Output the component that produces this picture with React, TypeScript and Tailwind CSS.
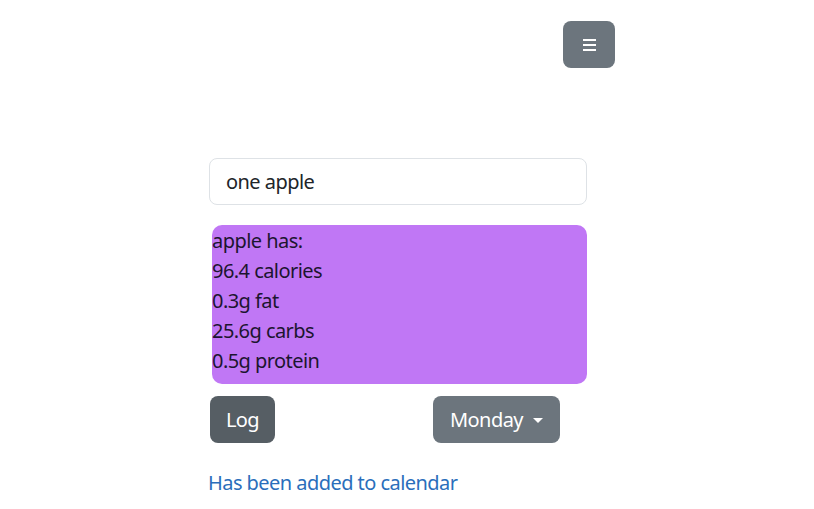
import { useState } from 'react';

const FONT = "font-['Segoe_UI','Noto_Sans','Open_Sans',sans-serif]";

const NUTRITION = ['apple has:', '96.4 calories', '0.3g fat', '25.6g carbs', '0.5g protein'];

export default function App() {
  const [food, setFood] = useState('one apple');

  return (
    <div className={`min-h-screen bg-white text-[20px] leading-[30px] tracking-[-0.55px] text-[#212529] ${FONT}`}>
      <div className="ml-[209px] flex w-[406px] flex-col pt-[21px]">
        <div className="flex justify-end">
          <button className="flex h-[47px] w-[52px] flex-col items-center justify-center gap-[3px] rounded-lg bg-[#6c757d]">
            <span className="h-[2px] w-[13px] bg-white" />
            <span className="h-[2px] w-[13px] bg-white" />
            <span className="h-[2px] w-[13px] bg-white" />
          </button>
        </div>

        <div className="mt-[90px] flex w-[378px] flex-col">
          <input
            value={food}
            onChange={e => setFood(e.target.value)}
            className="h-[47px] rounded-lg border border-[#dee2e6] px-4 text-[20px] tracking-[-0.55px] text-[#212529] outline-none"
          />

          <div className="mt-[20px] ml-[3px] h-[159px] rounded-[10px] bg-[#c077f5] pt-px text-[#1c1530]">
            {NUTRITION.map((line, idx) => (
              <div key={idx}>{line}</div>
            ))}
          </div>

          <div className="mt-[12px] flex items-start">
            <button className="ml-px flex h-[47px] w-[65px] items-center justify-center rounded-lg bg-[#565e64] pt-px text-white">Log</button>
            <button className="ml-[158px] flex h-[47px] w-[127px] items-center justify-center gap-[10px] rounded-lg bg-[#6c757d] pt-px text-white">
              Monday
              <span className="mt-[1px] h-0 w-0 border-x-[5px] border-t-[5px] border-x-transparent border-t-white" />
            </button>
          </div>

          <p className="mt-[25px] -ml-px text-[#2a6ebb]">Has been added to calendar</p>
        </div>
      </div>
    </div>
  );
}
